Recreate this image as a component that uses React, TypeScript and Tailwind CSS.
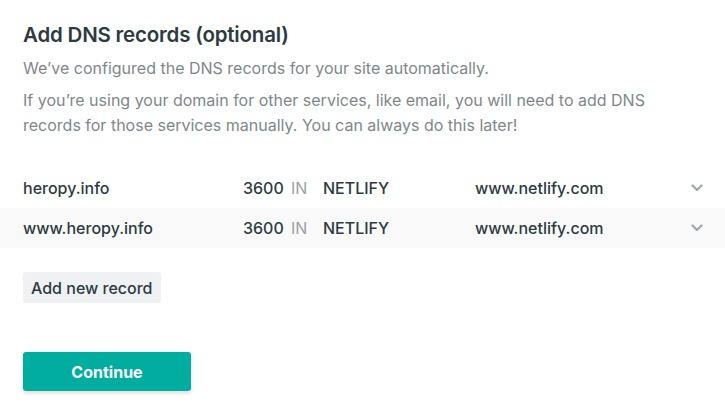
const records = [
  { name: 'heropy.info', ttl: '3600', type: 'NETLIFY', value: 'www.netlify.com', striped: false },
  { name: 'www.heropy.info', ttl: '3600', type: 'NETLIFY', value: 'www.netlify.com', striped: true },
];

function Chevron() {
  return (
    <svg width="12" height="8" viewBox="0 0 12 8" fill="none" className="text-[#a4aaae]">
      <path d="M1.5 1.5L6 6l4.5-4.5" stroke="currentColor" strokeWidth="2.4" strokeLinecap="round" strokeLinejoin="round" />
    </svg>
  );
}

export default function App() {
  return (
    <div
      className="min-h-screen bg-white text-[#2d3b41]"
      style={{ fontFamily: 'Inter, "Noto Sans", sans-serif' }}
    >
      {/* Intro */}
      <div className="px-[23px] pt-[20px]">
        <h2 className="text-[20.5px] font-semibold leading-[30px] tracking-[-0.2px]">Add DNS records (optional)</h2>
        <p className="mt-[6px] text-[16px] leading-[25px] text-[#7f878b]">
          We’ve configured the DNS records for your site automatically.
        </p>
        <p className="mt-[7px] text-[16px] leading-[25px] text-[#7f878b]">
          If you’re using your domain for other services, like email, you will need to add DNS
          <br />
          records for those services manually. You can always do this later!
        </p>
      </div>

      {/* Records */}
      <div className="mt-[30px]">
        {records.map((r) => (
          <div
            key={r.name}
            className={`flex h-[40px] items-center pl-[23px] pr-[22px] text-[16px] ${r.striped ? 'bg-[#f9f9f9]' : ''}`}
          >
            <span className="w-[220px] font-medium">{r.name}</span>
            <span className="w-[48px] font-medium">{r.ttl}</span>
            <span className="w-[32px] text-[#9ba2a6]">IN</span>
            <span className="w-[152px] font-medium">{r.type}</span>
            <span className="flex-1 font-medium">{r.value}</span>
            <Chevron />
          </div>
        ))}
      </div>

      {/* Actions */}
      <div className="px-[23px]">
        <button className="mt-[24px] h-[31px] rounded-[3px] bg-[#f0f1f2] px-[8px] text-[16px] font-medium text-[#2d3b41]">
          Add new record
        </button>
        <div>
          <button className="mt-[49px] h-[39px] w-[168px] rounded-[3px] bg-[#00ad9f] text-[16px] font-bold text-white shadow-[0_2px_4px_rgba(0,0,0,0.15)]">
            Continue
          </button>
        </div>
      </div>
    </div>
  );
}
